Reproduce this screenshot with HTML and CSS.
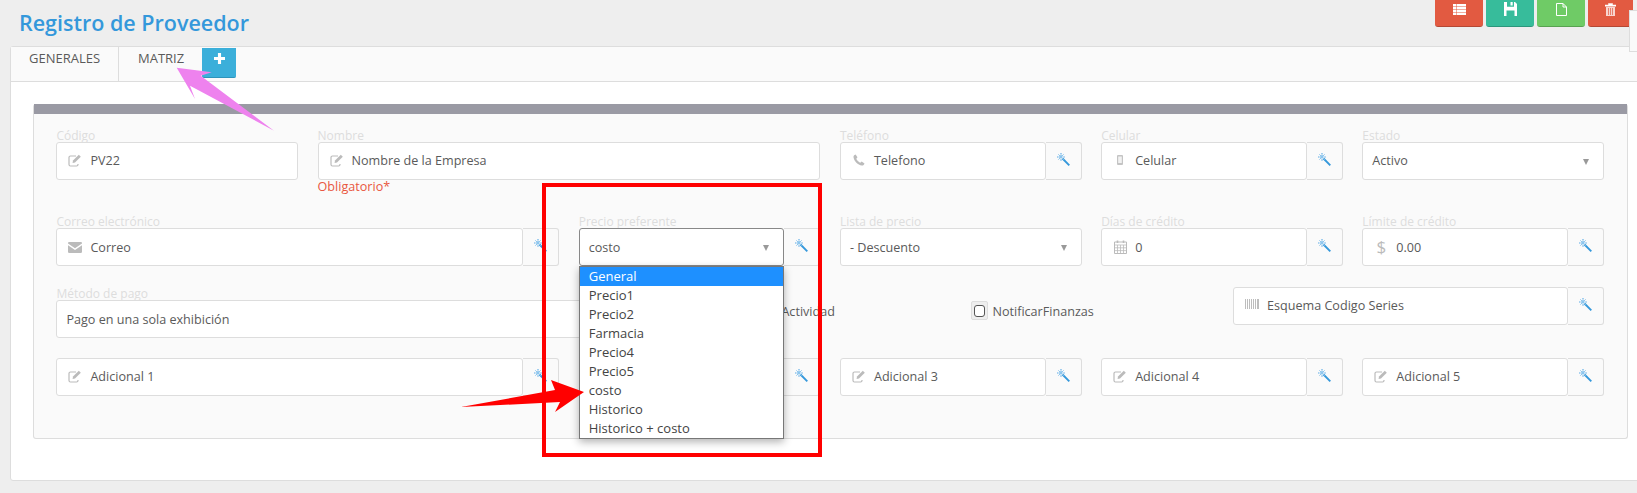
FILE: index.html
```html
<!DOCTYPE html>
<html lang="es">
<head>
<meta charset="utf-8">
<title>Registro de Proveedor</title>
<link rel="stylesheet" href="styles.css">
</head>
<body>
<svg class="defs" width="0" height="0" aria-hidden="true">
  <symbol id="i-wand" viewBox="0 0 13 13">
    <path d="M5.500 5.500L12.300 12.300" stroke="#3498db" stroke-width="1.900" fill="none"/>
    <path d="M4 0V8M0 4H8" stroke="#5aaae6" stroke-width="1.100" stroke-dasharray="1.300 .5" fill="none"/>
    <path d="M1.300 1.300L6.700 6.700M6.700 1.300L1.300 6.700" stroke="#8cc6ee" stroke-width="1" fill="none"/>
  </symbol>
  <symbol id="i-edit" viewBox="0 0 14 14">
    <path d="M10 11V11.500A1.500 1.500 0 0 1 8.500 13H2.500A1.500 1.500 0 0 1 1 11.500V4.500A1.500 1.500 0 0 1 2.500 3H8" stroke="#bbb" stroke-width="1.200" fill="none"/>
    <path d="M5 7.500L10.800 1.700L12.800 3.700L7 9.500L4.600 10Z" fill="#bbb"/>
  </symbol>
  <symbol id="i-mail" viewBox="0 0 14 11">
    <path d="M0 1.400A1.200 1.200 0 0 1 1.200 0H12.800A1.200 1.200 0 0 1 14 1.400L7 6.300Z" fill="#bbb"/>
    <path d="M0 3.200L7 8L14 3.200V9.800A1.200 1.200 0 0 1 12.800 11H1.200A1.200 1.200 0 0 1 0 9.800Z" fill="#bbb"/>
  </symbol>
  <symbol id="i-phone" viewBox="0 0 12 12">
    <path d="M2.600 0.500L4.500 3.300L3.300 4.800C3.900 6.300 5.700 8.100 7.200 8.700L8.700 7.500L11.500 9.400C11.200 10.800 10 11.700 8.800 11.500C4.800 10.800 1.200 7.200 0.500 3.200C0.300 2 1.200 0.800 2.600 0.500Z" fill="#bbb"/>
  </symbol>
  <symbol id="i-mobile" viewBox="0 0 6 10">
    <rect x="0" y="0" width="6" height="10" rx="1" fill="#c4c4c4"/>
    <rect x="1.200" y="1.500" width="3.600" height="6.500" fill="#f2f2f2"/>
  </symbol>
  <symbol id="i-cal" viewBox="0 0 13 14">
    <path d="M3.500 0.500V3M9.500 0.500V3" stroke="#bbb" stroke-width="1.600"/>
    <path d="M0.500 2H12.500V13.500H0.500Z" fill="none" stroke="#bbb"/>
    <path d="M0.500 5H12.500M0.500 7.800H12.500M0.500 10.600H12.500M3.500 5V13.500M6.500 5V13.500M9.500 5V13.500" stroke="#bbb" stroke-width=".8"/>
  </symbol>
  <symbol id="i-bar" viewBox="0 0 14 10">
    <path d="M.5 0V10M2.500 0V10M4.500 0V10M6.500 0V10M8.500 0V10M10.500 0V10M12.500 0V10M13.500 0V10" stroke="#bdbdbd" stroke-width="1"/>
  </symbol>
  <symbol id="i-list" viewBox="0 0 13 11">
    <path d="M0 0H13V2.400H0ZM0 3H13V5.200H0ZM0 5.800H13V8H0ZM0 8.600H13V11H0Z" fill="#fff"/>
    <path d="M3.500 0V11" stroke="#e25a41" stroke-width=".5"/>
  </symbol>
  <symbol id="i-save" viewBox="0 0 13 14">
    <path d="M0 0H3V4.800H10V0H11L13 2V14H10.500V8.500H2.500V14H0Z" fill="#fff"/>
    <rect x="6.500" y="0" width="2.200" height="3.500" fill="#fff"/>
  </symbol>
  <symbol id="i-file" viewBox="0 0 11 13">
    <path d="M.5 .5H7L10.500 4V12.500H.5Z" fill="none" stroke="#fff"/>
    <path d="M7 .5V4H10.500" fill="none" stroke="#fff"/>
  </symbol>
  <symbol id="i-trash" viewBox="0 0 11 13">
    <path d="M0 2H11V3.200H0ZM3.500 2V.4H7.500V2" fill="#fff" stroke="#fff" stroke-width=".5"/>
    <path d="M1 4H10V13H1Z" fill="#fff" fill-opacity=".75"/>
    <path d="M3.500 5V12M5.500 5V12M7.500 5V12" stroke="#e25a41" stroke-width=".7"/>
  </symbol>
</svg>

<header class="page-head">
  <h1 class="page-title">Registro de Proveedor</h1>
  <div class="actions">
    <button class="act act-red"><svg class="act-list"><use href="#i-list"/></svg></button>
    <button class="act act-teal"><svg class="act-save"><use href="#i-save"/></svg></button>
    <button class="act act-green"><svg class="act-file"><use href="#i-file"/></svg></button>
    <button class="act act-red act-last"><svg class="act-trash"><use href="#i-trash"/></svg></button>
  </div>
</header>
<div class="side-tab"></div>

<main class="card">
  <nav class="tabs">
    <a class="tab tab-active">GENERALES</a>
    <a class="tab">MATRIZ</a>
    <button class="tab-add">
      <svg class="plus" viewBox="0 0 12 12"><path d="M4.300 0H7.700V4.300H12V7.700H7.700V12H4.300V7.700H0V4.300H4.300Z" fill="#fff"/></svg>
    </button>
  </nav>
  <section class="panel">
    <div class="panel-bar"></div>
    <div class="panel-body">

      <div class="row">
        <div class="field">
          <label class="lbl">Código</label>
          <div class="group"><div class="input"><svg class="ic ic-14"><use href="#i-edit"/></svg>PV22</div></div>
        </div>
        <div class="field span2">
          <label class="lbl">Nombre</label>
          <div class="group"><div class="input"><svg class="ic ic-14"><use href="#i-edit"/></svg>Nombre de la Empresa</div></div>
          <div class="err">Obligatorio*</div>
        </div>
        <div class="field">
          <label class="lbl">Teléfono</label>
          <div class="group"><div class="input"><svg class="ic ic-12"><use href="#i-phone"/></svg>Telefono</div><div class="addon"><svg class="wand"><use href="#i-wand"/></svg></div></div>
        </div>
        <div class="field">
          <label class="lbl">Celular</label>
          <div class="group"><div class="input"><svg class="ic ic-7"><use href="#i-mobile"/></svg>Celular</div><div class="addon"><svg class="wand"><use href="#i-wand"/></svg></div></div>
        </div>
        <div class="field">
          <label class="lbl">Estado</label>
          <div class="group"><div class="select">Activo<i class="caret"></i></div></div>
        </div>
      </div>

      <div class="row row-low">
        <div class="field span2">
          <label class="lbl">Correo electrónico</label>
          <div class="group"><div class="input"><svg class="ic ic-mail"><use href="#i-mail"/></svg>Correo</div><div class="addon"><svg class="wand"><use href="#i-wand"/></svg></div></div>
        </div>
        <div class="field">
          <label class="lbl">Precio preferente</label>
          <div class="group">
            <div class="select select-open">costo<i class="caret"></i></div>
            <div class="addon"><svg class="wand"><use href="#i-wand"/></svg></div>
            <ul class="dropdown">
              <li class="opt opt-on">General</li>
              <li class="opt">Precio1</li>
              <li class="opt">Precio2</li>
              <li class="opt">Farmacia</li>
              <li class="opt">Precio4</li>
              <li class="opt">Precio5</li>
              <li class="opt">costo</li>
              <li class="opt">Historico</li>
              <li class="opt">Historico + costo</li>
            </ul>
          </div>
        </div>
        <div class="field">
          <label class="lbl">Lista de precio</label>
          <div class="group"><div class="select">- Descuento<i class="caret"></i></div></div>
        </div>
        <div class="field">
          <label class="lbl">Días de crédito</label>
          <div class="group"><div class="input"><svg class="ic ic-13"><use href="#i-cal"/></svg>0</div><div class="addon"><svg class="wand"><use href="#i-wand"/></svg></div></div>
        </div>
        <div class="field">
          <label class="lbl">Límite de crédito</label>
          <div class="group"><div class="input"><span class="ic dollar">$</span>0.00</div><div class="addon"><svg class="wand"><use href="#i-wand"/></svg></div></div>
        </div>
      </div>

      <div class="row-free">
        <div class="field field-pay row-low">
          <label class="lbl">Método de pago</label>
          <div class="group"><div class="select">Pago en una sola exhibición</div></div>
        </div>
        <span class="check-text check-a">Actividad</span>
        <span class="check-box"><i class="check-inner"></i></span>
        <span class="check-text">NotificarFinanzas</span>
        <div class="group group-serie"><div class="input"><svg class="ic ic-bar"><use href="#i-bar"/></svg>Esquema Codigo Series</div><div class="addon"><svg class="wand"><use href="#i-wand"/></svg></div></div>
      </div>

      <div class="row">
        <div class="field span2">
          <div class="group"><div class="input"><svg class="ic ic-14"><use href="#i-edit"/></svg>Adicional 1</div><div class="addon"><svg class="wand"><use href="#i-wand"/></svg></div></div>
        </div>
        <div class="field">
          <div class="group"><div class="input"></div><div class="addon"><svg class="wand"><use href="#i-wand"/></svg></div></div>
        </div>
        <div class="field">
          <div class="group"><div class="input"><svg class="ic ic-14"><use href="#i-edit"/></svg>Adicional 3</div><div class="addon"><svg class="wand"><use href="#i-wand"/></svg></div></div>
        </div>
        <div class="field">
          <div class="group"><div class="input"><svg class="ic ic-14"><use href="#i-edit"/></svg>Adicional 4</div><div class="addon"><svg class="wand"><use href="#i-wand"/></svg></div></div>
        </div>
        <div class="field">
          <div class="group"><div class="input"><svg class="ic ic-14"><use href="#i-edit"/></svg>Adicional 5</div><div class="addon"><svg class="wand"><use href="#i-wand"/></svg></div></div>
        </div>
      </div>

    </div>
  </section>
</main>

<div class="mark-box"></div>
<svg class="marks" viewBox="0 0 1637 493">
  <polygon points="176.700,67.700 211.700,72.300 200.700,75.700 274,130.700 190,85.700 195,99" fill="#ee82ee"/>
  <polygon points="461,407 555,390 551,380 584,392 555,412 560,402" fill="#ff0000"/>
</svg>
</body>
</html>
```

FILE: styles.css
```css
* { box-sizing: border-box; }

html, body {
  margin: 0;
  height: 493px;
  overflow: hidden;
}

body {
  position: relative;
  background: #eeeeee;
  font-family: "Open Sans", "Liberation Sans", sans-serif;
  font-size: 12.600px;
  color: #5a5a5a;
}

.defs { position: absolute; }

/* header */
.page-head {
  display: flex;
  justify-content: space-between;
  align-items: flex-start;
  height: 46px;
  padding: 0 4px 0 19px;
}

.page-title {
  margin: 8px 0 0;
  font-size: 21.500px;
  line-height: 30px;
  font-weight: 600;
  color: #3498db;
}

.actions { display: flex; gap: 3px; }

.act {
  display: flex;
  align-items: center;
  justify-content: center;
  width: 48px;
  height: 27px;
  padding: 0 0 8px;
  border: 0;
  border-bottom: 1px solid rgba(0, 0, 0, .2);
  border-radius: 0 0 3px 3px;
}
.act-last { width: 45px; }
.act-red { background: #e25a41; }
.act-teal { background: #37bc9b; }
.act-green { background: #6fcb66; }
.act-list { width: 13px; height: 11px; }
.act-save { width: 13px; height: 14px; }
.act-file { width: 11px; height: 13px; }
.act-trash { width: 11px; height: 13px; }

.side-tab {
  position: absolute;
  top: 10px;
  left: 1629px;
  width: 12px;
  height: 42px;
  background: #fafafa;
  border: 1px solid #ddd;
  z-index: 3;
}

/* card and tabs */
.card {
  height: 435px;
  margin: 0 -4px 0 10px;
  background: #fff;
  border: 1px solid #dddddd;
  border-radius: 3px;
}

.tabs {
  display: flex;
  align-items: flex-start;
  height: 35px;
  background: #fafafa;
  border-bottom: 1px solid #dddddd;
}

.tab {
  height: 34px;
  padding: 2px 0 0;
  line-height: 19px;
  font-size: 13px;
  color: #5a5a5a;
}
.tab:nth-child(1) { width: 108px; padding-left: 18px; border-right: 1px solid #ddd; }
.tab:nth-child(2) { width: 83px; padding-left: 19px; }

.tab-active { background: #fafafa; }

.tab-add {
  display: flex;
  align-items: center;
  justify-content: center;
  width: 34px;
  height: 30px;
  margin-top: 1px;
  padding: 0 0 8px;
  background: #3bafda;
  border: 0;
  border-bottom: 1px solid #2e94bb;
  border-radius: 0 0 2px 2px;
}
.plus { width: 11px; height: 11px; }

/* panel */
.panel {
  margin: 22px 0 0 22px;
  width: 1595px;
  height: 335px;
  background: #fafafa;
  border: 1px solid #dddddd;
  border-top: 0;
  border-radius: 3px;
}
.panel-bar { height: 10px; background: #9a9aa4; }
.panel-body { padding: 15px 23px 0 22.400px; }

.row {
  display: grid;
  grid-template-columns: repeat(6, 1fr);
  column-gap: 19.500px;
  margin-bottom: 21px;
}
.span2 { grid-column: span 2; }

.row-free {
  display: flex;
  align-items: flex-start;
  height: 50px;
  margin-bottom: 21px;
}

.lbl {
  display: block;
  height: 13px;
  font-size: 12px;
  line-height: 13px;
  color: #dddddd;
}

.err {
  height: 14px;
  line-height: 14px;
  color: #e9573f;
}

.group { position: relative; display: flex; height: 38px; }

.input, .select {
  flex: 1;
  display: flex;
  align-items: center;
  min-width: 0;
  padding-bottom: 2px;
  background: #fff;
  border: 1px solid #dddddd;
  border-radius: 3px;
}
.input { padding-left: 10px; }
.select { position: relative; padding-left: 9px; }
.select-open { border-color: #888; }
.row-low .input, .row-low .select { padding-bottom: 0; }

.addon {
  display: flex;
  align-items: center;
  justify-content: center;
  width: 36px;
  padding-bottom: 3px;
  background: #fafafa;
  border: 1px solid #dddddd;
  border-left: 0;
  border-radius: 0 3px 3px 0;
}
.wand { width: 13px; height: 13px; }

.ic { flex: none; margin-right: 8px; }
.ic-14 { width: 14px; height: 14px; margin-left: 1px; }
.ic-12 { width: 12px; height: 12px; margin: 0 9px 0 2px; }
.ic-7 { width: 6px; height: 10px; margin: 0 12px 0 5px; }
.ic-mail { width: 14px; height: 11px; margin-left: 1px; }
.ic-13 { width: 13px; height: 14px; margin: 0 8px 0 2px; }
.ic-bar { width: 14px; height: 10px; margin: 0 8px 2px 1px; }
.dollar { width: 14px; margin-left: 1px; font-size: 17px; line-height: 20px; color: #bbb; text-align: center; }

.caret {
  position: absolute;
  top: 16px;
  right: 14px;
  border-style: solid;
  border-width: 6px 3.500px 0;
  border-color: #999 transparent transparent;
}

/* open list of the select */
.dropdown {
  position: absolute;
  top: 38px;
  left: 0;
  width: 205px;
  height: 173px;
  margin: 0;
  padding: 0;
  list-style: none;
  background: #fff;
  border: 1px solid #777;
  box-shadow: 0 3px 8px rgba(0, 0, 0, .3);
  z-index: 2;
}
.opt { height: 19px; padding-left: 9px; font-size: 13px; line-height: 19px; color: #444; }
.opt-on { background: #1e90ff; color: #fff; }

/* row with checkboxes */
.field-pay { flex: none; width: 600px; }

.check-text { margin-top: 15px; line-height: 19px; }
.check-a { margin-left: 125px; margin-right: 136.500px; }

.check-box {
  display: flex;
  align-items: center;
  justify-content: center;
  width: 17px;
  height: 19px;
  margin: 14px 4px 0 0;
  background: #eee;
  border: 1px solid #ddd;
  border-radius: 2px;
}
.check-inner {
  width: 11px;
  height: 12px;
  background: #fff;
  border: 1px solid #555;
  border-radius: 3px;
}

.group-serie { flex: none; width: 371px; margin-left: auto; }

/* annotations laid over the screenshot */
.mark-box {
  position: absolute;
  top: 183px;
  left: 542px;
  width: 280px;
  height: 274px;
  border: 4px solid #ff0000;
  z-index: 4;
}
.marks {
  position: absolute;
  top: 0;
  left: 0;
  width: 1637px;
  height: 493px;
  z-index: 5;
  pointer-events: none;
}
```
